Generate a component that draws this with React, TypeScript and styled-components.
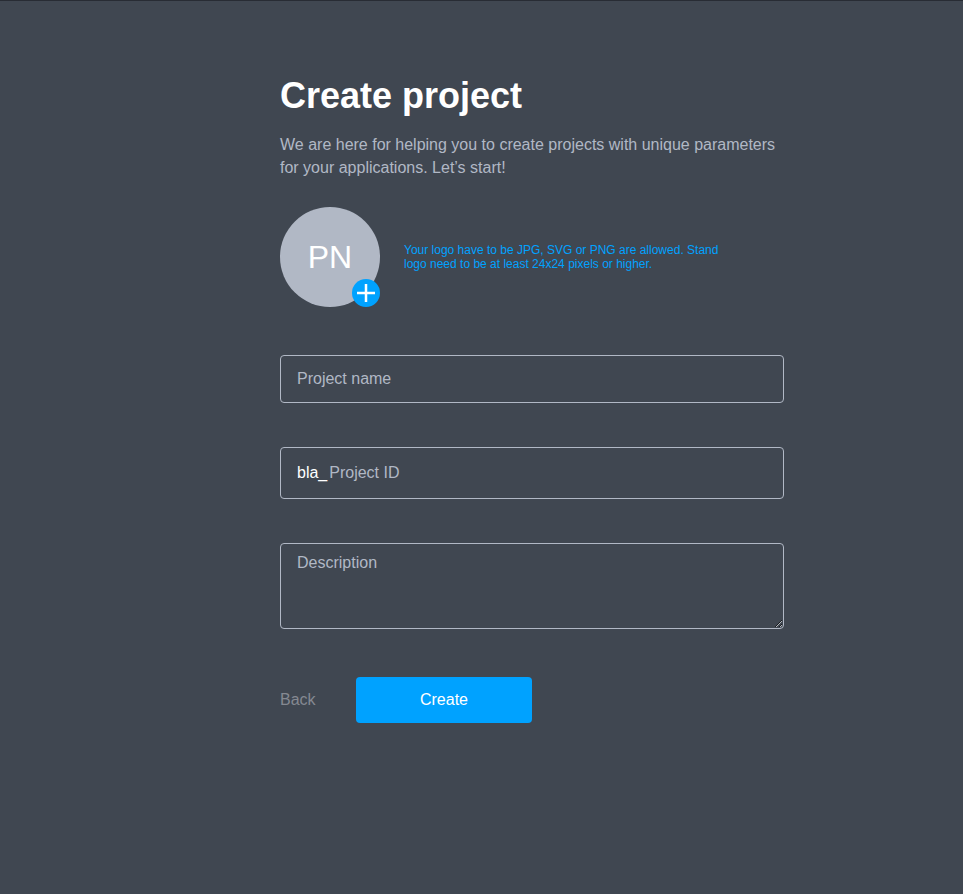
import React from "react";
import styled, { createGlobalStyle } from "styled-components";

const GlobalStyle = createGlobalStyle`
  *, *::before, *::after { box-sizing: border-box; }
  body {
    margin: 0;
    background: #404751;
    color: #ffffff;
    font-family: "Liberation Sans", Arial, sans-serif;
    font-size: 16px;
  }
`;

const Page = styled.main`
  min-height: 100vh;
  border-top: 1px solid #282c34;
  padding: 74px 0 0 280px;
`;

const Form = styled.form`
  width: 504px;
`;

const Title = styled.h1`
  margin: 0;
  font-size: 36px;
  line-height: 42px;
  font-weight: 700;
`;

const Lead = styled.p`
  margin: 16px 0 0;
  line-height: 23px;
  color: #b1b8c5;
`;

const LogoRow = styled.div`
  display: flex;
  align-items: center;
  gap: 24px;
  margin: 28px 0 48px;
`;

const Avatar = styled.div`
  position: relative;
  display: flex;
  align-items: center;
  justify-content: center;
  flex: none;
  width: 100px;
  height: 100px;
  border-radius: 50%;
  background: #b1b8c5;
  font-size: 32px;
  line-height: 36px;
`;

const AddBadge = styled.button`
  position: absolute;
  right: 0;
  bottom: 0;
  width: 28px;
  height: 28px;
  padding: 0;
  border: 0;
  border-radius: 50%;
  background: #00a2ff;

  svg { display: block; }
`;

const Hint = styled.p`
  margin: 0;
  width: 325px;
  font-size: 12px;
  line-height: 14px;
  color: #00a2ff;
`;

const Field = styled.div<{ $height: number }>`
  display: flex;
  align-items: center;
  height: ${(p) => p.$height}px;
  margin-bottom: 44px;
  padding: 0 16px;
  border: 1px solid #b1b8c5;
  border-radius: 4px;
`;

const Prefix = styled.span`
  line-height: 18px;
  margin-right: 2px;
`;

const Input = styled.input`
  flex: 1;
  min-width: 0;
  height: 18px;
  padding: 0;
  border: 0;
  outline: 0;
  background: transparent;
  color: #ffffff;
  font: inherit;

  &::placeholder { color: #b1b8c5; opacity: 1; }
`;

const Description = styled.textarea`
  display: block;
  width: 100%;
  height: 86px;
  padding: 10px 16px;
  border: 1px solid #b1b8c5;
  border-radius: 4px;
  outline: 0;
  background: transparent;
  color: #ffffff;
  font: inherit;
  line-height: 18px;
  resize: vertical;

  &::placeholder { color: #b1b8c5; opacity: 1; }
`;

const Actions = styled.div`
  display: flex;
  align-items: center;
  gap: 40px;
  margin-top: 48px;
`;

const BackButton = styled.button`
  width: 36px;
  padding: 0;
  border: 0;
  background: transparent;
  color: #858991;
  font: inherit;
  text-align: left;
`;

const CreateButton = styled.button`
  width: 176px;
  height: 46px;
  padding: 0;
  border: 0;
  border-radius: 4px;
  background: #00a2ff;
  color: #ffffff;
  font: inherit;
`;

export default function App() {
  return (
    <>
      <GlobalStyle />
      <Page>
        <Form onSubmit={(e) => e.preventDefault()}>
          <Title>Create project</Title>
          <Lead>
            We are here for helping you to create projects with unique parameters for your
            applications. Let’s start!
          </Lead>
          <LogoRow>
            <Avatar>
              PN
              <AddBadge type="button" aria-label="Add logo">
                <svg width="28" height="28" viewBox="0 0 28 28" fill="none">
                  <path d="M14 5v18M5 14h18" stroke="#fff" strokeWidth="2.5" />
                </svg>
              </AddBadge>
            </Avatar>
            <Hint>
              Your logo have to be JPG, SVG or PNG are allowed. Stand logo need to be at least
              24x24 pixels or higher.
            </Hint>
          </LogoRow>
          <Field $height={48}>
            <Input placeholder="Project name" />
          </Field>
          <Field $height={52}>
            <Prefix>bla_</Prefix>
            <Input placeholder="Project ID" />
          </Field>
          <Description placeholder="Description" />
          <Actions>
            <BackButton type="button">Back</BackButton>
            <CreateButton type="submit">Create</CreateButton>
          </Actions>
        </Form>
      </Page>
    </>
  );
}
